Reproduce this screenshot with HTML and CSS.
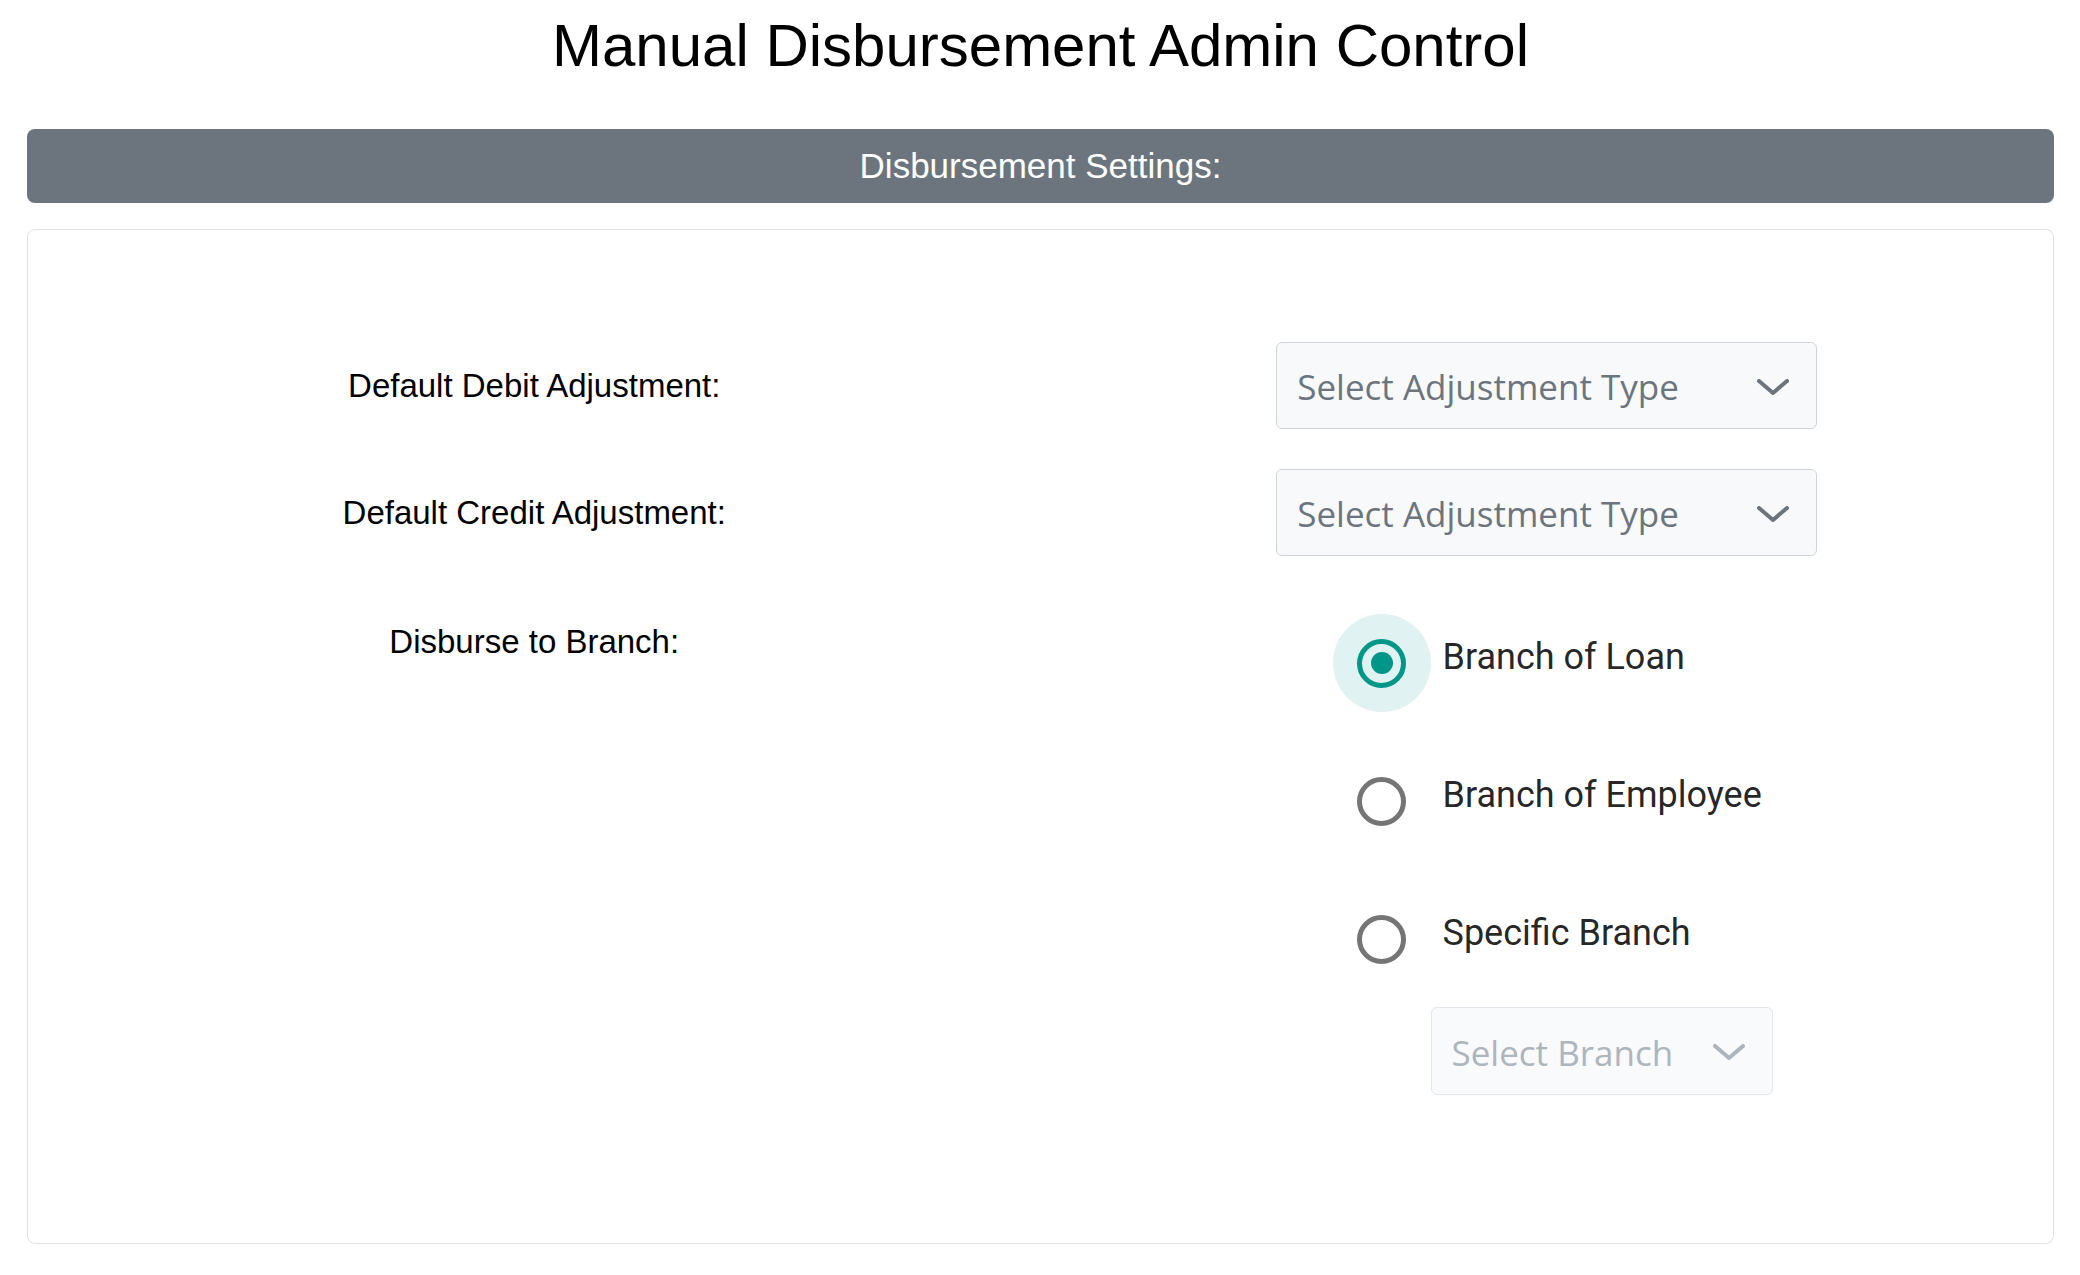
FILE: index.html
```html
<!DOCTYPE html>
<html lang="en">
<head>
    <meta charset="UTF-8">
    <meta name="viewport" content="width=device-width, initial-scale=1.0">
    <title>Manual Disbursement Admin Control</title>
    <link rel="stylesheet" href="styles.css">
</head>
<body>
    <h1 class="page-title">Manual Disbursement Admin Control</h1>

    <div class="settings-header">Disbursement Settings:</div>

    <div class="settings-card">
        <!-- Debit -->
        <div class="form-row">
            <label class="form-label">Default Debit Adjustment:</label>
            <div class="form-field">
                <div class="select-box">
                    <span class="select-text">Select Adjustment Type</span>
                    <svg class="chevron" width="32" height="16" viewBox="0 0 32 16"><path d="M2 2 L16 14 L30 2"/></svg>
                </div>
            </div>
        </div>

        <!-- Credit -->
        <div class="form-row">
            <label class="form-label">Default Credit Adjustment:</label>
            <div class="form-field">
                <div class="select-box">
                    <span class="select-text">Select Adjustment Type</span>
                    <svg class="chevron" width="32" height="16" viewBox="0 0 32 16"><path d="M2 2 L16 14 L30 2"/></svg>
                </div>
            </div>
        </div>

        <!-- Branch -->
        <div class="form-row branch-row">
            <label class="form-label">Disburse to Branch:</label>
            <div class="form-field">
                <div class="radio-group">
                    <div class="radio-option checked">
                        <span class="radio-halo"><span class="radio-ring"><span class="radio-dot"></span></span></span>
                        <span class="radio-label">Branch of Loan</span>
                    </div>
                    <div class="radio-option">
                        <span class="radio-halo"><span class="radio-ring"></span></span>
                        <span class="radio-label">Branch of Employee</span>
                    </div>
                    <div class="radio-option">
                        <span class="radio-halo"><span class="radio-ring"></span></span>
                        <span class="radio-label">Specific Branch</span>
                    </div>
                    <div class="select-box select-branch">
                        <span class="select-text">Select Branch</span>
                        <svg class="chevron" width="32" height="16" viewBox="0 0 32 16"><path d="M2 2 L16 14 L30 2"/></svg>
                    </div>
                </div>
            </div>
        </div>
    </div>
</body>
</html>
```

FILE: styles.css
```css
/* General Styles */
body {
    font-family: "Liberation Sans", Arial, sans-serif;
    margin: 0;
    padding: 0 26px 0 27px;
    background-color: #ffffff;
    color: #000000;
}

.page-title {
    margin: 10px 0 47px;
    font-size: 60px;
    font-weight: normal;
    line-height: 72px;
    text-align: center;
}

/* Header bar */
.settings-header {
    height: 74px;
    line-height: 74px;
    background-color: #6c757d;
    color: #ffffff;
    font-size: 35px;
    text-align: center;
    border-radius: 8px;
}

/* Card */
.settings-card {
    margin-top: 26px;
    padding: 112px 0 148px;
    border: 1px solid #dee2e6;
    border-radius: 8px;
}

.form-row {
    display: grid;
    grid-template-columns: 1fr 1fr;
    align-items: center;
    margin-bottom: 40px;
}

.form-row.branch-row {
    align-items: start;
    margin-top: 58px;
    margin-bottom: 0;
}

.form-label {
    font-size: 33px;
    line-height: 1.5;
    text-align: center;
}

.branch-row .form-label {
    padding-top: 3px;
}

.form-field {
    display: flex;
    flex-direction: column;
    align-items: center;
}

/* Select */
.select-box {
    box-sizing: border-box;
    display: flex;
    align-items: center;
    justify-content: space-between;
    width: 541px;
    height: 87px;
    padding: 2px 27px 0 20px;
    background-color: #f8f9fa;
    border: 1px solid #ced4da;
    border-radius: 6px;
    font-family: "Open Sans", "Noto Sans", sans-serif;
    font-size: 35px;
    color: #6c757d;
}

.chevron path {
    fill: none;
    stroke: #6c757d;
    stroke-width: 4;
    stroke-linecap: round;
    stroke-linejoin: round;
}

.select-branch {
    width: 342px;
    height: 88px;
    margin: 19px 0 0 98px;
    background-color: #f9fafb;
    border-color: #e2e6ea;
    color: #adb5bd;
}

.select-branch .chevron path {
    stroke: #adb5bd;
}

/* Radios */
.radio-group {
    align-self: flex-start;
    margin-left: 292px;
    display: flex;
    flex-direction: column;
}

.radio-option {
    display: flex;
    align-items: center;
    height: 98px;
}

.radio-option + .radio-option {
    margin-top: 40px;
}

.radio-halo {
    display: flex;
    align-items: center;
    justify-content: center;
    width: 98px;
    height: 98px;
    border-radius: 50%;
}

.radio-ring {
    box-sizing: border-box;
    display: flex;
    align-items: center;
    justify-content: center;
    width: 49px;
    height: 49px;
    border: 5px solid #757575;
    border-radius: 50%;
}

.radio-dot {
    width: 22px;
    height: 22px;
    border-radius: 50%;
    background-color: #009688;
}

.radio-option.checked .radio-halo {
    background-color: #e0f2f1;
}

.radio-option.checked .radio-ring {
    border-color: #009688;
}

.radio-label {
    margin: 0 0 12px 12px;
    font-family: Roboto, "Noto Sans", sans-serif;
    font-size: 36px;
    color: rgba(0, 0, 0, 0.87);
}
```
